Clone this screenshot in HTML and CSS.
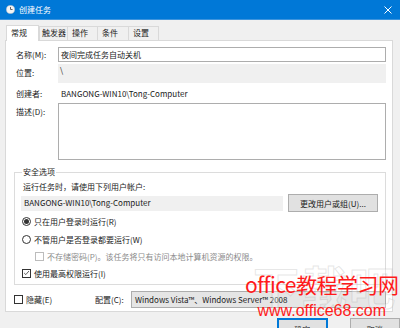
FILE: index.html
```html
<!DOCTYPE html>
<html lang="zh-CN">
<head>
    <meta charset="UTF-8">
    <title>创建任务</title>
    <link rel="stylesheet" href="styles.css">
</head>
<body>
    <div class="window">
        <div class="titlebar">
            <svg class="app-icon" width="9" height="9" viewBox="0 0 10 10">
                <circle cx="5" cy="5" r="4.5" fill="#f4f4f4" stroke="#c9c9c9" stroke-width="0.6"/>
                <path d="M5 2.2 V5 H7.3" fill="none" stroke="#555" stroke-width="1"/>
            </svg>
            <span class="title">创建任务</span>
            <svg class="close" width="8" height="8" viewBox="0 0 8 8">
                <path d="M0.5 0.5 L7.5 7.5 M7.5 0.5 L0.5 7.5" stroke="white" stroke-width="1"/>
            </svg>
        </div>
        <div class="tabs">
            <div class="tab active">常规</div>
            <div class="tab">触发器</div>
            <div class="tab">操作</div>
            <div class="tab">条件</div>
            <div class="tab">设置</div>
        </div>
        <div class="panel">
            <div class="row r-name">
                <label>名称(M):</label>
                <div class="textbox">夜间完成任务自动关机</div>
            </div>
            <div class="row r-loc">
                <label>位置:</label>
                <div class="readonly">\</div>
            </div>
            <div class="row r-author">
                <label>创建者:</label>
                <div class="plain">BANGONG-WIN10\Tong-Computer</div>
            </div>
            <div class="row r-desc">
                <label>描述(D):</label>
                <div class="textarea"></div>
            </div>
            <fieldset class="group">
                <legend>安全选项</legend>
                <div class="hint">运行任务时，请使用下列用户帐户:</div>
                <div class="account">
                    <div class="account-box">BANGONG-WIN10\Tong-Computer</div>
                    <div class="button change">更改用户或组(U)...</div>
                </div>
                <div class="option"><span class="radio checked"></span>只在用户登录时运行(R)</div>
                <div class="option"><span class="radio"></span>不管用户是否登录都要运行(W)</div>
                <div class="option sub disabled"><span class="check"></span>不存储密码(P)。该任务将只有访问本地计算机资源的权限。</div>
                <div class="option"><span class="check">
                    <svg width="8" height="8" viewBox="0 0 9 9"><path d="M1.5 4.5 L3.6 6.6 L7.6 2" fill="none" stroke="#333" stroke-width="1"/></svg>
                </span>使用最高权限运行(I)</div>
            </fieldset>
            <div class="bottom">
                <div class="option"><span class="check"></span>隐藏(E)</div>
                <label class="cfg-label">配置(C):</label>
                <div class="select">Windows Vista™、Windows Server™ 2008</div>
            </div>
        </div>
        <div class="actions">
            <div class="button ok">确定</div>
            <div class="button">取消</div>
        </div>
        <div class="watermark">
            <div class="wm-faint">下载吧</div>
            <div class="wm-big">office教程学习网</div>
            <div class="wm-url">www.office68.com</div>
        </div>
    </div>
</body>
</html>
```

FILE: styles.css
```css
* {
    box-sizing: border-box;
}
body {
    margin: 0;
    font-family: "Noto Sans CJK SC", "Noto Sans", sans-serif;
    font-size: 8px;
    color: #1a1a1a;
    background: #f0f0f0;
    white-space: nowrap;
}
.window {
    position: relative;
    width: 400px;
    height: 328px;
    overflow: hidden;
    background: #f0f0f0;
}
.titlebar {
    height: 20px;
    background: #0078d7;
    color: white;
    display: flex;
    align-items: center;
    padding: 0 8px 0 6px;
    border-bottom: 1px solid #3d94dd;
}
.app-icon {
    margin-right: 4px;
}
.close {
    margin-left: auto;
}
.tabs {
    display: flex;
    align-items: flex-end;
    padding: 0 0 0 6px;
    height: 20px;
}
.tab {
    height: 14px;
    border: 1px solid #d9d9d9;
    border-bottom: none;
    border-left: none;
    background: #f0f0f0;
    line-height: 12px;
    padding-left: 4px;
}
.tab:nth-child(2) { width: 29px; border-left: 1px solid #d9d9d9; padding-left: 2px; }
.tab:nth-child(3) { width: 30px; }
.tab:nth-child(4) { width: 31px; }
.tab:nth-child(5) { width: 30px; }
.tab.active {
    height: 16px;
    width: 33px;
    background: white;
    border: 1px solid #d9d9d9;
    border-bottom: none;
    margin-bottom: -1px;
    position: relative;
    z-index: 1;
    padding: 1px 0 0 4px;
}
.panel {
    margin-left: 5px;
    width: 388px;
    height: 272px;
    background: white;
    border: 1px solid #d9d9d9;
    padding: 5px 6px 0 4px;
}
.row {
    display: grid;
    grid-template-columns: 48px 328px;
}
.row label {
    padding-left: 6px;
}
.r-name {
    height: 17px;
    align-items: center;
}
.textbox {
    height: 15px;
    border: 1px solid #adadad;
    padding-left: 2px;
    line-height: 13px;
}
.r-loc {
    height: 21px;
    align-items: center;
}
.r-loc label {
    margin-top: -3px;
}
.readonly {
    height: 19px;
    background: #f0f0f0;
    padding: 0 2px;
    line-height: 12px;
}
.r-author {
    height: 19px;
    align-items: center;
}
.plain {
    padding-left: 3px;
}
.r-desc {
    height: 57px;
}
.r-desc label {
    margin-top: 3px;
}
.textarea {
    height: 57px;
    border: 1px solid #adadad;
}
.group {
    margin: 6px 0 0 4px;
    width: 372px;
    border: 1px solid #dcdcdc;
    padding: 2px 0 2px 8px;
}
.group legend {
    padding: 0 1px;
    margin-left: -1px;
    line-height: 12px;
}
.hint {
    height: 14px;
    line-height: 14px;
}
.account {
    display: flex;
    align-items: center;
    height: 18px;
}
.account-box {
    width: 262px;
    height: 15px;
    background: #f0f0f0;
    padding-left: 3px;
    line-height: 14px;
    margin-left: -2px;
}
.button {
    height: 18px;
    background: #e1e1e1;
    border: 1px solid #adadad;
    display: flex;
    align-items: center;
    justify-content: center;
}
.change {
    width: 90px;
    margin-left: 5px;
}
.option {
    display: flex;
    align-items: center;
    height: 18px;
}
.group .option {
    margin-left: -1px;
}
.group .sub {
    padding-left: 13px;
    height: 16px;
}
.disabled {
    color: #8a8a8a;
}
.radio {
    width: 9px;
    height: 9px;
    border: 1px solid #333;
    border-radius: 50%;
    margin-right: 3px;
    display: flex;
    align-items: center;
    justify-content: center;
}
.radio.checked::after {
    content: "";
    width: 5px;
    height: 5px;
    border-radius: 50%;
    background: #333;
}
.check {
    width: 9px;
    height: 9px;
    border: 1px solid #333;
    margin-right: 3px;
    display: flex;
    align-items: center;
    justify-content: center;
    background: white;
}
.disabled .check {
    border-color: #bcbcbc;
}
.bottom {
    display: flex;
    align-items: center;
    height: 18px;
    margin-top: 5px;
    padding-left: 4px;
}
.bottom .option {
    width: 81px;
}
.cfg-label {
    width: 36px;
}
.select {
    width: 255px;
    height: 17px;
    background: #e5e5e5;
    border: 1px solid #adadad;
    padding-left: 3px;
    line-height: 15px;
    overflow: hidden;
}
.actions {
    display: flex;
    gap: 22px;
    padding: 6px 0 0 277px;
}
.actions .button {
    width: 53px;
    height: 22px;
}
.actions .ok {
    border: 1px solid #0078d7;
    box-shadow: inset 0 0 0 1px #0078d7;
}
.watermark {
    position: absolute;
    left: 245px;
    top: 274px;
    color: #ff1a1a;
    font-family: "Noto Sans CJK SC", sans-serif;
    text-align: center;
    line-height: 1;
}
.wm-faint {
    position: absolute;
    left: 8px;
    top: -12px;
    font-size: 46px;
    font-weight: bold;
    color: rgba(255, 255, 255, 0.3);
    -webkit-text-stroke: 1px rgba(170, 170, 170, 0.3);
    letter-spacing: 2px;
}
.wm-big {
    position: relative;
    font-size: 21px;
    letter-spacing: -0.5px;
}
.wm-url {
    position: relative;
    font-family: "Liberation Sans", sans-serif;
    font-size: 16px;
    margin-top: 8px;
}
```
